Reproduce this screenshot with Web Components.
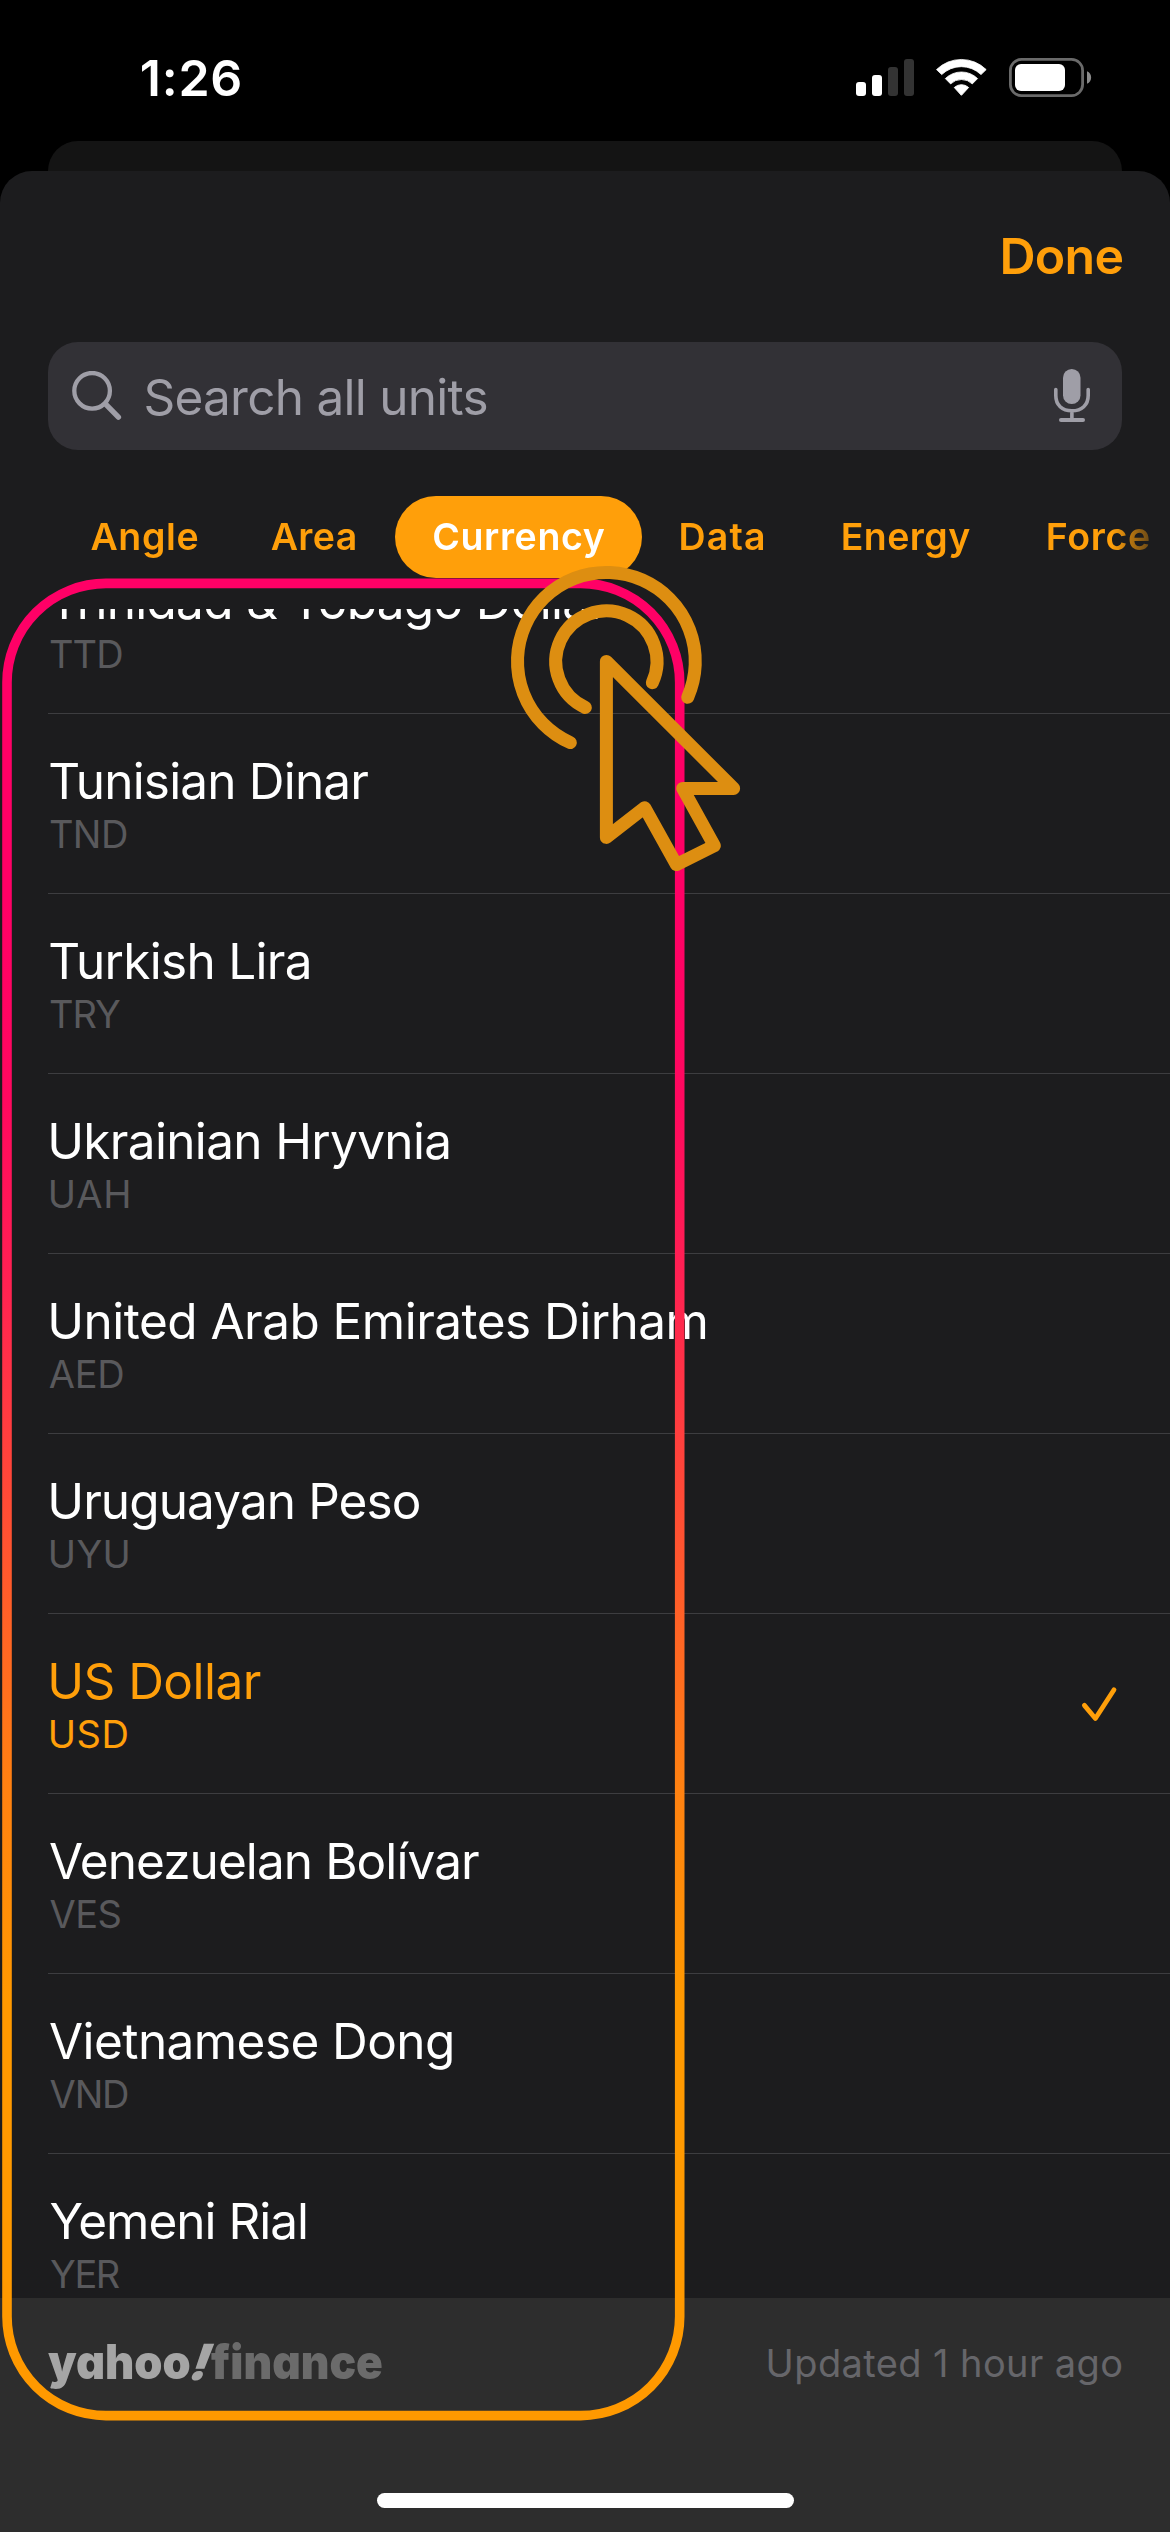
<!DOCTYPE html>
<html lang="en">
<head>
<meta charset="utf-8">
<title>Units</title>
<style>
  html, body { margin: 0; background: #000; }
  body { width: 1170px; height: 2532px; overflow: hidden; font-family: Inter, "Liberation Sans", sans-serif; color: #fff; }
</style>
</head>
<body>
<unit-picker></unit-picker>
<script>
const define = (name, html, setup) => {
  const tpl = document.createElement('template');
  tpl.innerHTML = html;
  customElements.define(name, class extends HTMLElement {
    constructor() {
      super();
      this.attachShadow({ mode: 'open' }).append(tpl.content.cloneNode(true));
    }
    connectedCallback() { if (setup) setup.call(this, this.shadowRoot); }
  });
};

/* Tracks (or, with the stretch attribute, condenses) a label to a set ink width.
   The lead attribute sets the space before the first glyph's ink. */
const pen = document.createElement('canvas').getContext('2d');
define('fit-text', `<style>
  :host { display: inline-block; white-space: nowrap; }
  span { display: inline-block; transform-origin: 0 50%; }
</style><span><slot></slot></span>`, function (root) {
  const target = +this.getAttribute('ink'), text = this.textContent;
  const cs = getComputedStyle(this), span = root.querySelector('span');
  pen.font = `${cs.fontWeight} ${cs.fontSize} ${cs.fontFamily}`;
  const m = pen.measureText(text);
  const ink = m.actualBoundingBoxRight + m.actualBoundingBoxLeft;
  if (this.hasAttribute('lead')) span.style.marginLeft = +this.getAttribute('lead') + m.actualBoundingBoxLeft + 'px';
  if (this.hasAttribute('stretch')) {
    span.style.transform = `scaleX(${target / ink})`;
    this.style.width = target + 'px';
  } else {
    const ls = (target - ink) / (text.length - 1);
    span.style.letterSpacing = ls + 'px';
    span.style.marginRight = -ls + 'px';
  }
});

define('status-bar', `<style>
  :host { display: flex; justify-content: space-between; height: 141px; box-sizing: border-box; padding: 47px 77px 0 138px; }
  .time { font-size: 50px; font-weight: 600; line-height: 62px; }
  svg { display: block; margin-top: 8px; }
</style>
<div class="time"><fit-text lead="3.8" ink="98.5">1:26</fit-text></div>
<svg width="237" height="45" viewBox="856 55 237 45" fill="#fff">
  <rect x="856" y="82" width="10" height="14" rx="3"/>
  <rect x="872" y="75" width="10" height="21" rx="3"/>
  <rect x="888" y="67" width="10" height="29" rx="3" fill="#333"/>
  <rect x="904" y="59" width="10" height="37" rx="3" fill="#333"/>
  <path d="M936.5 69.6A35.5 35.5 0 0 1 986.2 69.6L981 74.6A28.3 28.3 0 0 0 941.7 74.6Z" stroke="#fff" stroke-width=".8" stroke-linejoin="round"/>
  <path d="M945.3 78.6A23 23 0 0 1 977.6 78.6L972.3 83.9A15.6 15.6 0 0 0 950.6 83.9Z" stroke="#fff" stroke-width=".8" stroke-linejoin="round"/>
  <path d="M954.3 87.5A10.6 10.6 0 0 1 968.6 87.5L961.4 95.3Z" stroke="#fff" stroke-width="1" stroke-linejoin="round"/>
  <rect x="1010.4" y="59.4" width="72.2" height="36.2" rx="11" fill="none" stroke="#6a6a6a" stroke-width="2.8"/>
  <rect x="1015" y="64" width="50" height="27" rx="6"/>
  <path d="M1087 71.2C1092.5 73.4 1092.5 81.6 1087 83.8Z" fill="#8b8b8b"/>
</svg>`);

define('search-field', `<style>
  :host { display: flex; align-items: center; height: 108px; margin: 0 48px; padding: 0 32px 0 24px; box-sizing: border-box; border-radius: 30px; background: #323136; color: #9f9ea7; font-size: 49.5px; line-height: 60px; }
  .label { flex: 1; margin: 2px 0 0 20px; }
  svg { display: block; flex: none; }
</style>
<svg width="50" height="50" viewBox="72 371 50 50" fill="none" stroke="#9f9ea7" stroke-linecap="round">
  <circle cx="92.1" cy="390.8" r="17.8" stroke-width="4.3"/>
  <path d="M105.6 404.2L118.4 417.2" stroke-width="5.4"/>
</svg>
<div class="label"><fit-text lead="3.4" ink="341">Search all units</fit-text></div>
<svg width="36" height="54" viewBox="1054 370 36 54" fill="none" stroke="#9f9ea7" stroke-linecap="round">
  <rect x="1063" y="370" width="17.5" height="35" rx="8.7" fill="#9f9ea7" stroke="none"/>
  <path d="M1055.8 390.6V396.5C1055.8 406 1062 411.8 1071.9 411.8S1088.2 406 1088.2 396.5V390.6M1071.9 412V420.5" stroke-width="3.6"/>
  <path d="M1061 421H1083" stroke-width="4"/>
</svg>`);

define('unit-tab', `<style>
  :host { display: flex; flex: none; align-items: center; justify-content: center; height: 82px; border-radius: 41px; color: #ff9f0a; font-size: 37.5px; font-weight: 600; line-height: 46px; }
  :host([selected]) { background: #ff9f0a; color: #fff; }
</style><slot></slot>`, function () { this.style.width = this.getAttribute('width') + 'px'; });

define('unit-tabs', `<style>
  :host { display: flex; height: 82px; margin-top: 46px; padding-left: 56px; overflow: hidden;
    -webkit-mask-image: linear-gradient(90deg, #000 1112px, transparent 1170px); mask-image: linear-gradient(90deg, #000 1112px, transparent 1170px); }
</style><slot></slot>`);

define('currency-row', `<style>
  :host { display: flex; flex: none; align-items: center; height: 180px; box-sizing: border-box; margin-left: 48px; border-bottom: 1px solid #3d3d40; }
  .text { flex: 1; padding-top: 1px; }
  .name { height: 60px; line-height: 60px; font-size: 49.5px; color: #fff; }
  .code { height: 46px; line-height: 46px; font-size: 38px; color: #59595c; }
  svg { display: none; margin-right: 51px; }
  :host([selected]) .name, :host([selected]) .code { color: #ff9f0a; }
  :host([selected]) svg { display: block; }
</style>
<div class="text"><div class="name"><slot name="name"></slot></div><div class="code"><slot></slot></div></div>
<svg width="38" height="38" viewBox="1081 1685 38 38" fill="none" stroke="#ff9f0a" stroke-width="4.8" stroke-linecap="round" stroke-linejoin="round"><path d="M1084.4 1705.4L1095.4 1718.5L1114 1689.8"/></svg>`);

define('currency-list', `<style>
  :host { display: flex; flex-direction: column; height: 1689px; overflow: hidden; margin-top: 31px; }
  slot::slotted(:first-child) { margin-top: -75px; }
</style><slot></slot>`);

define('source-footer', `<style>
  :host { display: flex; flex-direction: column; justify-content: space-between; align-items: stretch; height: 234px; box-sizing: border-box; padding: 40px 47px 24px 48px; background: #2d2d2d; }
  .line { display: flex; justify-content: space-between; align-items: flex-start; }
  .brand { display: flex; font-size: 47.5px; font-weight: 900; line-height: 58px; margin-top: -5px; font-feature-settings: "cv11"; color: #a5a5a5; }
  .bang { width: 23px; transform: skewX(-20deg); transform-origin: 0 45px; font-size: 50px; text-indent: -1px; }
  .fin { color: #6b6b6b; }
  .when { font-size: 38px; line-height: 46px; color: #66666a; padding-top: 2px; }
  .home { align-self: center; width: 417px; height: 15px; border-radius: 8px; background: #fff; }
</style>
<div class="line">
  <div class="brand"><fit-text stretch ink="140">yahoo</fit-text><div class="bang">!</div><fit-text class="fin" stretch ink="169">finance</fit-text></div>
  <div class="when"><fit-text ink="352.6">Updated 1 hour ago</fit-text></div>
</div>
<div class="home"></div>`);

define('tap-highlight', `<style>
  :host { position: absolute; left: 0; top: 0; pointer-events: none; }
  svg { display: block; }
</style>
<svg width="1170" height="2532" viewBox="0 0 1170 2532" fill="none">
  <defs><linearGradient id="g" gradientUnits="userSpaceOnUse" x1="0" y1="900" x2="0" y2="2000">
    <stop offset="0" stop-color="#ff0066"/><stop offset=".18" stop-color="#ff085f"/>
    <stop offset=".345" stop-color="#ff2152"/><stop offset=".8" stop-color="#ff8012"/><stop offset="1" stop-color="#ff9900"/>
  </linearGradient></defs>
  <rect x="7" y="583.4" width="672.7" height="1832.2" rx="99" stroke="url(#g)" stroke-width="9.6"/>
  <g stroke="#dd8e11" stroke-width="13" stroke-linecap="round" stroke-linejoin="round">
    <path d="M570.3 742.6A88.9 88.9 0 1 1 687.7 697.3"/>
    <path d="M585.3 707.5A50.6 50.6 0 1 1 652.3 682.7"/>
    <path d="M606.4 661.4L733.6 788.4H682.7L714.3 845.7L676.4 864.6L644.7 807.7L606.4 837.4Z"/>
  </g>
</svg>`);

const lead = { T: 2.3, U: 3.2, V: 2, Y: 2.4, A: 1.2 };
const rows = [
  ['Trinidad & Tobago Dollar', 557, 'TTD', 72.3], ['Tunisian Dinar', 318, 'TND', 77],
  ['Turkish Lira', 258.5, 'TRY', 70], ['Ukrainian Hryvnia', 397, 'UAH', 77.5],
  ['United Arab Emirates Dirham', 654.4, 'AED', 74.4], ['Uruguayan Peso', 368.6, 'UYU', 76.7],
  ['US Dollar', 209.5, 'USD', 76.7], ['Venezuelan Bolívar', 429, 'VES', 71],
  ['Vietnamese Dong', 402, 'VND', 78.5], ['Yemeni Rial', 255.7, 'YER', 69.8]
].map(([n, w, c, cw]) => `<currency-row${c === 'USD' ? ' selected' : ''}><fit-text slot="name" lead="${lead[n[0]]}" ink="${w}">${n.replace('&', '&amp;')}</fit-text><fit-text lead="${lead[c[0]] - .4}" ink="${cw}">${c}</fit-text></currency-row>`).join('');

define('unit-picker', `<style>
  :host { display: block; position: relative; width: 1170px; height: 2532px; overflow: hidden; background: #000; }
  .behind { height: 30px; margin: 0 48px; border-radius: 30px 30px 0 0; background: #141414; }
  .sheet { display: flex; flex-direction: column; height: 2361px; border-radius: 32px 32px 0 0; background: #1c1c1e; overflow: hidden; }
  .done { align-self: flex-end; margin: 55px 46px 0 0; height: 116px; font-size: 50px; font-weight: 600; line-height: 60px; color: #ff9f0a; }
</style>
<status-bar></status-bar>
<div class="behind"></div>
<div class="sheet">
  <div class="done"><fit-text ink="120">Done</fit-text></div>
  <search-field></search-field>
  <unit-tabs>
    <unit-tab width="177"><fit-text ink="107">Angle</fit-text></unit-tab>
    <unit-tab width="162"><fit-text ink="84">Area</fit-text></unit-tab>
    <unit-tab width="247" selected><fit-text ink="171.5">Currency</fit-text></unit-tab>
    <unit-tab width="160"><fit-text ink="82.6">Data</fit-text></unit-tab>
    <unit-tab width="207"><fit-text ink="127.5">Energy</fit-text></unit-tab>
    <unit-tab width="178"><fit-text ink="101.4">Force</fit-text></unit-tab>
  </unit-tabs>
  <currency-list>${rows}</currency-list>
  <source-footer></source-footer>
</div>
<tap-highlight></tap-highlight>`);
</script>
</body>
</html>
